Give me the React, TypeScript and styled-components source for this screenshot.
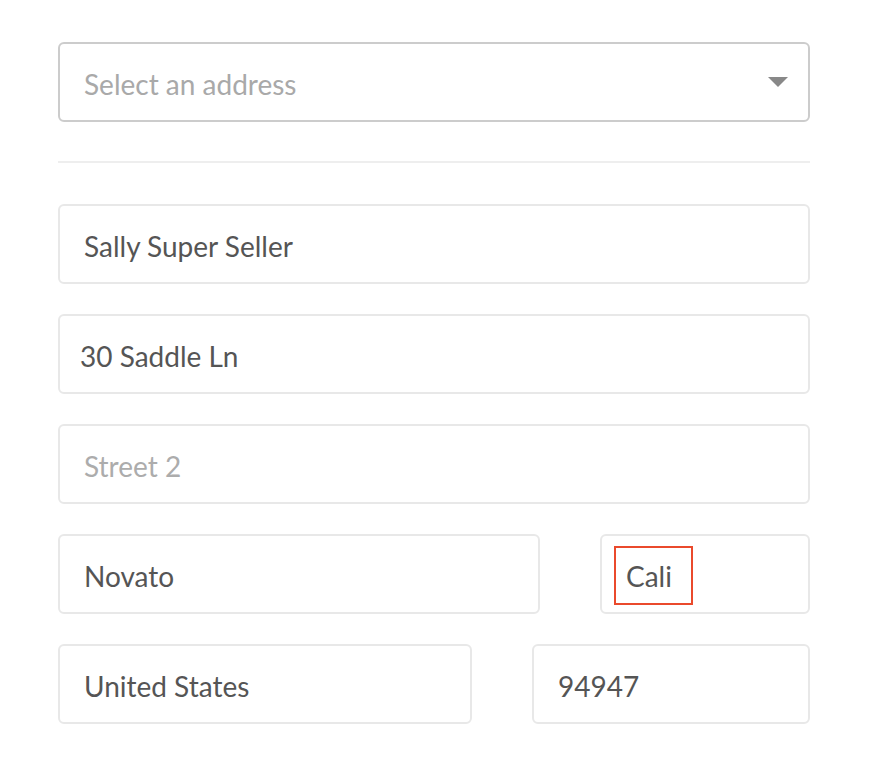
import React from "react";
import styled, { createGlobalStyle } from "styled-components";

const GlobalStyle = createGlobalStyle`
  html, body { margin: 0; padding: 0; background: #ffffff; }
  body { font-family: Lato, "Open Sans", sans-serif; }
`;

const Form = styled.div`
  width: 752px;
  margin: 42px 0 0 58px;
  display: flex;
  flex-direction: column;
`;

const SelectBox = styled.div`
  box-sizing: border-box;
  height: 80px;
  border: 2px solid #cccccc;
  border-radius: 6px;
  display: flex;
  align-items: center;
  justify-content: space-between;
  padding: 3px 20px 0 24px;
  font-size: 28px;
  color: #a9a9a9;
`;

const Caret = styled.span`
  width: 0;
  height: 0;
  border-left: 10px solid transparent;
  border-right: 10px solid transparent;
  border-top: 10px solid #888888;
  margin-bottom: 4px;
`;

const Divider = styled.hr`
  border: none;
  height: 2px;
  background: #eeeeee;
  margin: 39px 0 41px;
`;

const Fields = styled.div`
  display: flex;
  flex-direction: column;
  gap: 30px;
`;

const Row = styled.div<{ $cols: string }>`
  display: grid;
  grid-template-columns: ${(p) => p.$cols};
  column-gap: 60px;
`;

const Field = styled.div<{ $placeholder?: boolean; $pad?: number }>`
  position: relative;
  box-sizing: border-box;
  height: 80px;
  border: 2px solid #e8e8e8;
  border-radius: 6px;
  display: flex;
  align-items: center;
  padding: 3px 0 0 ${(p) => p.$pad ?? 24}px;
  font-size: 28px;
  color: ${(p) => (p.$placeholder ? "#acacac" : "#555555")};
`;

const Highlight = styled.span`
  position: absolute;
  left: 12px;
  top: 10px;
  width: 79px;
  height: 59px;
  box-sizing: border-box;
  border: 2px solid #ea4a2c;
`;

export default function App() {
  return (
    <>
      <GlobalStyle />
      <Form>
        <SelectBox>
          <span>Select an address</span>
          <Caret />
        </SelectBox>
        <Divider />
        <Fields>
          <Field>Sally Super Seller</Field>
          <Field $pad={20}>30 Saddle Ln</Field>
          <Field $placeholder>Street 2</Field>
          <Row $cols="482px 210px">
            <Field>Novato</Field>
            <Field>
              Cali
              <Highlight />
            </Field>
          </Row>
          <Row $cols="414px 278px">
            <Field>United States</Field>
            <Field>94947</Field>
          </Row>
        </Fields>
      </Form>
    </>
  );
}
